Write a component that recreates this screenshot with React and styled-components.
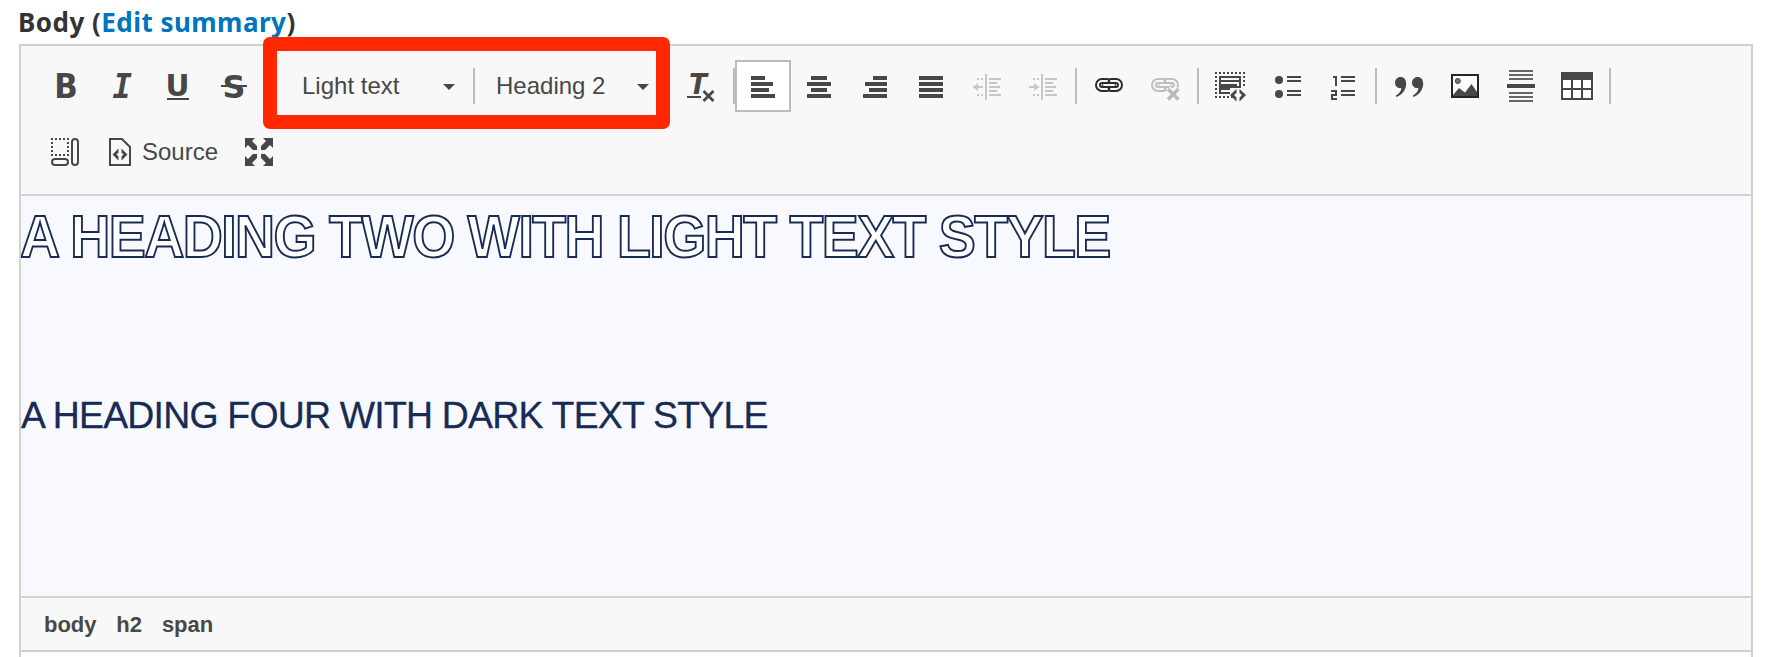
import React from "react";
import styled, { createGlobalStyle } from "styled-components";

const Global = createGlobalStyle`
  * { box-sizing: border-box; }
  body { margin: 0; background: #fff; overflow: hidden; font-family: "Liberation Sans", Arial, sans-serif; }
`;

const Page = styled.main`
  position: relative;
  width: 1780px;
  height: 657px;
  overflow: hidden;
  padding: 0 27px 0 18px;
`;

const FieldLabel = styled.div`
  height: 44px;
  font: 700 26px/44px "Noto Sans", "Open Sans", sans-serif;
  letter-spacing: 0.47px;
  color: #333;
  white-space: nowrap;
`;

const SummaryLink = styled.a`
  color: #0074bd;
  text-decoration: none;
`;

const Editor = styled.section`
  border: 2px solid #d1d1d1;
  height: 640px;
  margin-left: 1px;
`;

const Toolbar = styled.div`
  display: flex;
  flex-direction: column;
  gap: 14px;
  height: 150px;
  padding: 14px 0 0 17px;
  background: #f8f8f8;
  border-bottom: 2px solid #d1d1d1;
`;

const ToolRow = styled.div`
  display: flex;
  align-items: center;
  height: 52px;
  margin-left: ${(p) => p.$inset || 0}px;
`;

const ToolButton = styled.button`
  display: flex;
  align-items: center;
  justify-content: center;
  flex: none;
  width: 56px;
  height: 52px;
  padding: 0;
  border: 0;
  background: ${(p) => (p.$active ? "#fff" : "transparent")};
  box-shadow: ${(p) => (p.$active ? "inset 0 0 0 2px #bcbcbc" : "none")};
  color: ${(p) => (p.disabled ? "#c6c6c6" : "#474747")};
`;

const Glyph = styled.svg`
  display: block;
  width: 56px;
  height: 52px;
`;

const Separator = styled.span`
  flex: none;
  width: 2px;
  height: 36px;
  margin: 0 ${(p) => p.$after ?? 4}px 0 ${(p) => p.$before ?? 4}px;
  background: #bcbcbc;
`;

const Combo = styled.button`
  display: flex;
  align-items: center;
  justify-content: space-between;
  flex: none;
  width: ${(p) => p.$width}px;
  height: 52px;
  padding: 0;
  border: 0;
  background: transparent;
  color: #474747;
  font: 24px/52px "Liberation Sans", Arial, sans-serif;
`;

const Caret = styled.span`
  border: 6px solid transparent;
  border-top-color: #474747;
  border-bottom: 0;
  margin-top: 2px;
`;

const SourceButton = styled(Combo)`
  justify-content: flex-start;
  gap: 11px;
  margin: 0 14px 0 16px;
`;

const SourceGlyph = styled.svg`
  width: 22px;
  height: 28px;
  flex: none;
`;

const Content = styled.div`
  height: 400px;
  overflow: hidden;
  background: #f8f9fe;
  text-transform: uppercase;
  white-space: nowrap;
`;

const LightHeading = styled.h2`
  margin: 0 0 0 -1px;
  padding-top: 9px;
  height: 195px;
  font: 700 59px/64px "Liberation Sans", Arial, sans-serif;
  letter-spacing: -1.65px;
  color: #fff;
  -webkit-text-stroke: 2px #172b54;
  transform: scaleX(0.94);
  transform-origin: left;
`;

const DarkHeading = styled.h4`
  margin: 0;
  font: 400 37.4px/48px "Liberation Sans", Arial, sans-serif;
  letter-spacing: -0.77px;
  color: #172b54;
  -webkit-text-stroke: 0.3px #172b54;
`;

const PathBar = styled.footer`
  display: flex;
  gap: 20px;
  height: 56px;
  padding-left: 23px;
  border: solid #d1d1d1;
  border-width: 2px 0;
  background: #f8f8f8;
  color: #484848;
  font: 700 22px/54px "Liberation Sans", Arial, sans-serif;
  letter-spacing: -0.05px;
`;

const Highlight = styled.div`
  position: absolute;
  left: 263px;
  top: 36.5px;
  width: 407px;
  height: 92px;
  border: 14px solid #ff2800;
  border-radius: 7px;
  pointer-events: none;
`;

const Letter = ({ x, w, y = 38, size = 33, family = "DejaVu Sans", italic, children }) => (
  <text
    x={x}
    y={y}
    textLength={w}
    lengthAdjust="spacingAndGlyphs"
    fontFamily={family}
    fontSize={size}
    fontWeight="700"
    fontStyle={italic ? "oblique" : "normal"}
    fill="currentColor"
  >
    {children}
  </text>
);

const Bars = ({ rows }) =>
  rows.map(([x, y, w, h = 2], i) => <rect key={i} x={x} y={y} width={w} height={h} fill="currentColor" />);

const Indentation = ({ inward }) => (
  <>
    <Bars
      rows={[
        [26, 14, 2, 26],
        [30, 18, 12], [30, 22, 8], [30, 26, 11], [30, 30, 8], [30, 34, 12],
        [18, 18, 2], [22, 18, 2], [18, 34, 2], [22, 34, 2], [14, 26, 10],
      ]}
    />
    <path d={inward ? "M19 23l5 4-5 4z" : "M19 23l-5 4 5 4z"} fill="currentColor" />
  </>
);

const Chain = ({ dark, light }) => {
  const links = (
    <>
      <path d="M26 21h-5a4 4 0 0 0 0 8h5" />
      <path d="M30 21h5a4 4 0 0 1 0 8h-5" />
    </>
  );
  return (
    <g fill="none" strokeLinecap="round">
      <g stroke={dark} strokeWidth="6">{links}</g>
      <g stroke={light} strokeWidth="2">{links}</g>
      <path d="M24 25h8" stroke={dark} strokeWidth="5.6" />
      <path d="M23 25h10" stroke={light} strokeWidth="2" />
    </g>
  );
};

const icons = {
  bold: <Letter x={16.3} w={23.5}>B</Letter>,
  italic: <Letter x={18.5} w={19.5} family="DejaVu Sans Mono" italic>I</Letter>,
  underline: (
    <>
      <Letter x={15.5} w={24} y={36} size={30}>U</Letter>
      <Bars rows={[[17, 38, 22]]} />
    </>
  ),
  strike: (
    <>
      <Letter x={16.5} w={23} y={37.5} size={31.5}>S</Letter>
      <Bars rows={[[15, 25, 26]]} />
    </>
  ),
  removeFormat: (
    <>
      <Letter x={16} w={18} y={34} size={27.5} italic>T</Letter>
      <Bars rows={[[14, 36, 14]]} />
      <path d="M30.500 31l10 10M40.500 31l-10 10" stroke="currentColor" strokeWidth="2.800" />
    </>
  ),
  alignLeft: <Bars rows={[[16, 16, 14, 4], [16, 22, 22, 4], [16, 28, 18, 4], [16, 34, 24, 4]]} />,
  alignCenter: <Bars rows={[[20, 16, 16, 4], [16, 22, 24, 4], [20, 28, 16, 4], [16, 34, 24, 4]]} />,
  alignRight: <Bars rows={[[26, 16, 14, 4], [18, 22, 22, 4], [22, 28, 18, 4], [16, 34, 24, 4]]} />,
  justify: <Bars rows={[[16, 16, 24, 4], [16, 22, 24, 4], [16, 28, 24, 4], [16, 34, 24, 4]]} />,
  outdent: <Indentation />,
  indent: <Indentation inward />,
  link: <Chain dark="#2c2c2c" light="#f8f8f8" />,
  unlink: (
    <>
      <Chain dark="#bfbfbf" light="#f8f8f8" />
      <path d="M31 29l10.500 10.500M41.500 29L31 39.500" stroke="#f8f8f8" strokeWidth="7" />
      <path d="M31 29l10.500 10.500M41.500 29L31 39.500" stroke="#bababa" strokeWidth="3.400" />
    </>
  ),
  template: (
    <>
      <path d="M12 13h30M12 37h18M13 16v20M41 16v12" stroke="currentColor" strokeWidth="2" strokeDasharray="2 2" fill="none" />
      <path d="M27 33H17V17h20v10H18M18 21h19M18 29h9M18 25h16" stroke="currentColor" strokeWidth="2" fill="none" />
      <path d="M33.500 29v4L31 35l2.500 2.500v4L27 35zM36.500 29v4l2.500 2-2.500 2.500v4L43 35z" fill="currentColor" />
    </>
  ),
  bullets: (
    <>
      <circle cx="20" cy="20" r="4" fill="currentColor" />
      <circle cx="20" cy="34" r="4" fill="currentColor" />
      <Bars rows={[[28, 16, 14], [28, 20, 14], [28, 30, 14], [28, 34, 14]]} />
    </>
  ),
  numbers: (
    <>
      <Bars rows={[[26, 16, 14], [26, 20, 14], [26, 30, 14], [26, 34, 14]]} />
      <path d="M18 17h3v9M16 31h5v4h-4v4h5" stroke="currentColor" strokeWidth="2" fill="none" />
    </>
  ),
  quote: (
    <path
      d="M19.500 17c3.500 0 5.700 2.700 5.700 6.500C25.200 30 21 35 15.500 37l-.8-1.300c3.500-2 5.500-4.500 5.700-7.700-3.500.8-6.400-1.700-6.400-5.500 0-3 2.400-5.500 5.500-5.500zM36.500 17c3.500 0 5.700 2.700 5.700 6.500C42.200 30 38 35 32.500 37l-.8-1.300c3.500-2 5.500-4.500 5.700-7.700-3.500.8-6.400-1.700-6.400-5.500 0-3 2.400-5.500 5.500-5.500z"
      fill="currentColor"
    />
  ),
  image: (
    <>
      <rect x="15" y="15" width="26" height="22" fill="#fff" stroke="#1f2829" strokeWidth="2" />
      <circle cx="20.800" cy="21" r="2.500" fill="#777" stroke="#3c4040" />
      <path d="M16 36v-1l6-7 6 4.500 6.500-8.500 5.500 8v4z" fill="#484a4a" />
    </>
  ),
  rule: (
    <>
      <g opacity=".82">
        <Bars rows={[[16, 10, 24], [16, 14, 24], [16, 18, 24], [16, 32, 24], [16, 36, 24], [16, 40, 24]]} />
      </g>
      <Bars rows={[[14, 24, 28, 4]]} />
    </>
  ),
  table: (
    <>
      <rect x="12" y="12" width="32" height="28" fill="currentColor" />
      <path d="M14 20h8v8h-8zM24 20h8v8h-8zM34 20h8v8h-8zM14 30h8v8h-8zM24 30h8v8h-8zM34 30h8v8h-8z" fill="#fff" />
    </>
  ),
  blocks: (
    <g fill="none" stroke="currentColor" strokeWidth="2">
      <path d="M14 13h18M14 29h18M15 16v12M31 16v12" strokeDasharray="2 2" />
      <rect x="15" y="33" width="16" height="6" rx="3" />
      <rect x="35" y="13" width="6" height="26" rx="3" />
    </g>
  ),
  maximize: (
    <path
      d="M14 12h10l-3 3 5 5v4h-4l-5-5-3 3zM42 12v10l-3-3-5 5h-4v-4l5-5-3-3zM14 40V30l3 3 5-5h4v4l-5 5 3 3zM42 40H32l3-3-5-5v-4h4l5 5 3-3z"
      fill="currentColor"
    />
  ),
};

const Tool = ({ icon, label, active, disabled }) => (
  <ToolButton aria-label={label} $active={active} disabled={disabled}>
    <Glyph viewBox="0 0 56 52" aria-hidden="true">{icons[icon]}</Glyph>
  </ToolButton>
);

const ComboGap = styled.span`
  flex: none;
  width: ${(p) => p.$width}px;
`;

export default function App() {
  return (
    <Page>
      <Global />
      <FieldLabel>
        Body (<SummaryLink>Edit summary</SummaryLink>)
      </FieldLabel>
      <Editor>
        <Toolbar>
          <ToolRow>
            <Tool icon="bold" label="Bold" />
            <Tool icon="italic" label="Italic" />
            <Tool icon="underline" label="Underline" />
            <Tool icon="strike" label="Strikethrough" />
            <ComboGap $width={40} />
            <Combo $width={153}>Light text<Caret /></Combo>
            <Separator $before={18} $after={21} />
            <Combo $width={153}>Heading 2<Caret /></Combo>
            <ComboGap $width={24} />
            <Tool icon="removeFormat" label="Remove format" />
            <Separator $after={0} />
            <Tool icon="alignLeft" label="Align left" active />
            <Tool icon="alignCenter" label="Center" />
            <Tool icon="alignRight" label="Align right" />
            <Tool icon="justify" label="Justify" />
            <Tool icon="outdent" label="Decrease indent" disabled />
            <Tool icon="indent" label="Increase indent" disabled />
            <Separator />
            <Tool icon="link" label="Link" />
            <Tool icon="unlink" label="Unlink" disabled />
            <Separator />
            <Tool icon="template" label="Template" />
            <Tool icon="bullets" label="Bulleted list" />
            <Tool icon="numbers" label="Numbered list" />
            <Separator />
            <Tool icon="quote" label="Block quote" />
            <Tool icon="image" label="Image" />
            <Tool icon="rule" label="Horizontal line" />
            <Tool icon="table" label="Table" />
            <Separator />
          </ToolRow>
          <ToolRow $inset={-1}>
            <Tool icon="blocks" label="Show blocks" />
            <SourceButton $width={108}>
              <SourceGlyph viewBox="0 0 22 28" aria-hidden="true">
                <path d="M1 1h12l8 8v18H1z" fill="none" stroke="currentColor" strokeWidth="2" />
                <path d="M9.500 10.500v4L7.500 16.500l2 2v4L3.500 16.500zM12.500 10.500v4l2 2-2 2v4l6-6z" fill="currentColor" />
              </SourceGlyph>
              Source
            </SourceButton>
            <Tool icon="maximize" label="Maximize" />
          </ToolRow>
        </Toolbar>
        <Content>
          <LightHeading>A heading two with light text style</LightHeading>
          <DarkHeading>A heading four with dark text style</DarkHeading>
        </Content>
        <PathBar>
          <span>body</span>
          <span>h2</span>
          <span>span</span>
        </PathBar>
      </Editor>
      <Highlight />
    </Page>
  );
}
